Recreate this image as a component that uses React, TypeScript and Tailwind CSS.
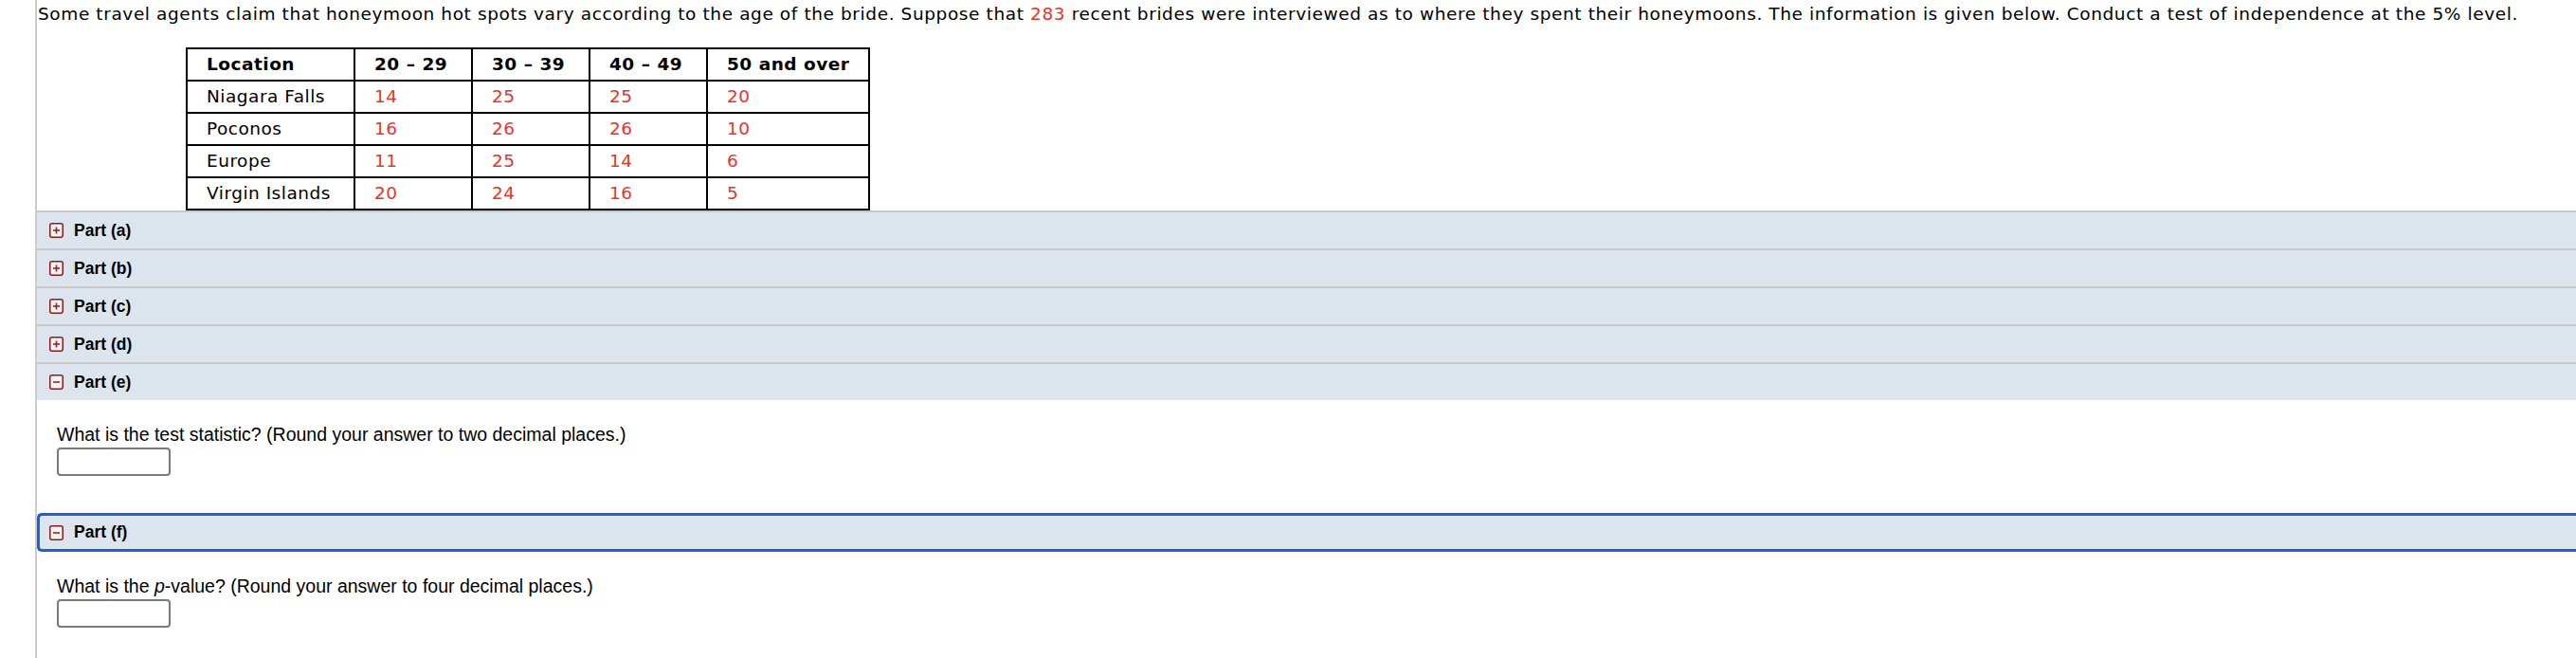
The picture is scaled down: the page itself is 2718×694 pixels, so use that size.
import { Fragment } from "react";
import type { ReactNode } from "react";

const headers = ["Location", "20 \u2013 29", "30 \u2013 39", "40 \u2013 49", "50 and over"];

const rows: [string, number[]][] = [
  ["Niagara Falls", [14, 25, 25, 20]],
  ["Poconos", [16, 26, 26, 10]],
  ["Europe", [11, 25, 14, 6]],
  ["Virgin Islands", [20, 24, 16, 5]],
];

function ToggleIcon({ open }: { open: boolean }) {
  return (
    <svg width="15" height="16" viewBox="0 0 15 16" className="shrink-0">
      <rect x="0.75" y="0.75" width="13.5" height="14.5" rx="2" fill="#f4f4f4" stroke="#8b1c1c" strokeWidth="1.5" />
      <path d="M4 8h7" stroke="#a51d1d" strokeWidth="1.6" />
      {!open && <path d="M7.5 4.5v7" stroke="#a51d1d" strokeWidth="1.6" />}
    </svg>
  );
}

function PartHeader({ label, open = false }: { label: string; open?: boolean }) {
  return (
    <div className="flex h-[40px] items-center gap-[11px] border-t-2 border-[#c9c9c9] bg-[#dce5ee] pl-[13px]">
      <ToggleIcon open={open} />
      <span className="font-['Liberation_Sans',Arial,sans-serif] text-[17.5px] font-bold text-black">{label}</span>
    </div>
  );
}

function Question({ children }: { children: ReactNode }) {
  return (
    <div className="pl-[21px] pt-[24px] font-['Liberation_Sans',Arial,sans-serif] text-black">
      <p className="text-[19.5px] leading-[24px]">{children}</p>
      <input
        type="text"
        className="mt-[2px] block h-[30px] w-[120px] rounded-[4px] border-2 border-[#7a7a7a] bg-white"
      />
    </div>
  );
}

export default function App() {
  return (
    <div className="min-h-[694px] w-[2718px] overflow-hidden bg-white pl-[37px]">
      <div className="min-h-[694px] border-l-2 border-[#cccccc]">
        {/* Problem statement */}
        <p className="whitespace-nowrap pl-[1px] pt-[1px] font-['DejaVu_Sans',Verdana,sans-serif] text-[18.5px] leading-[28px] tracking-[0.6px] text-black">
          Some travel agents claim that honeymoon hot spots vary according to the age of the bride. Suppose that{" "}
          <span className="text-[#e8342a]">283</span> recent brides were interviewed as to where they spent their
          honeymoons. The information is given below. Conduct a test of independence at the 5% level.
        </p>

        {/* Data table */}
        <div className="ml-[157px] mt-[21px] grid w-fit grid-cols-[175px_122px_122px_122px_169px] gap-[2px] bg-black p-[2px] font-['DejaVu_Sans',Verdana,sans-serif] text-[18.5px] tracking-[0.5px]">
          {headers.map((h) => (
            <div key={h} className="flex h-[32px] items-center whitespace-nowrap bg-white px-[20px] font-bold text-black">
              {h}
            </div>
          ))}
          {rows.map(([place, vals]) => (
            <Fragment key={place}>
              <div className="flex h-[32px] items-center whitespace-nowrap bg-white px-[20px] text-black">{place}</div>
              {vals.map((v, i) => (
                <div key={i} className="flex h-[32px] items-center bg-white px-[20px] text-[#e8342a]">
                  {v}
                </div>
              ))}
            </Fragment>
          ))}
        </div>

        {/* Parts */}
        <PartHeader label="Part (a)" />
        <PartHeader label="Part (b)" />
        <PartHeader label="Part (c)" />
        <PartHeader label="Part (d)" />
        <PartHeader label="Part (e)" open />

        <Question>What is the test statistic? (Round your answer to two decimal places.)</Question>

        <div className="mt-[39px] flex h-[41px] items-center gap-[11px] rounded-l-[5px] border-y-[3px] border-l-[3px] border-[#2060c8] bg-[#dce5ee] pl-[10px]">
          <ToggleIcon open />
          <span className="font-['Liberation_Sans',Arial,sans-serif] text-[17.5px] font-bold text-black">Part (f)</span>
        </div>

        <Question>
          What is the <i>p</i>-value? (Round your answer to four decimal places.)
        </Question>
      </div>
    </div>
  );
}
